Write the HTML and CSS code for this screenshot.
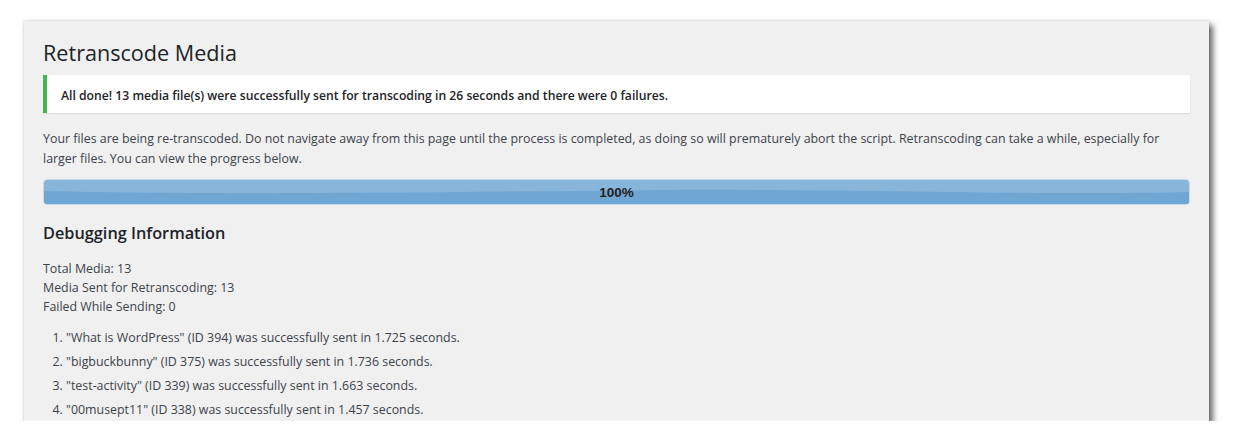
FILE: index.html
```html
<!DOCTYPE html>
<html lang="en">
<head>
<meta charset="utf-8">
<title>Retranscode Media</title>
<link rel="stylesheet" href="styles.css">
</head>
<body>
<div class="window">
  <div class="wrap">
    <h1 class="title">Retranscode Media</h1>
    <div class="notice">
      <p>All done! 13 media file(s) were successfully sent for transcoding in 26 seconds and there were 0 failures.</p>
    </div>
    <p class="intro">Your files are being re-transcoded. Do not navigate away from this page until the process is completed, as doing so will prematurely abort the script. Retranscoding can take a while, especially for larger files. You can view the progress below.</p>
    <div class="progress">
      <svg class="wave" viewBox="0 0 1146 26" preserveAspectRatio="none" aria-hidden="true">
        <rect x="0" y="0" width="1146" height="26" fill="#88b5da"/>
        <path d="M0,12 C150,16 350,14 600,11 C800,9 1000,17 1146,13 L1146,26 L0,26 Z" fill="#70a7d2"/>
      </svg>
      <span class="label">100%</span>
    </div>
    <h3 class="subtitle">Debugging Information</h3>
    <div class="stats">
      <div>Total Media: 13</div>
      <div>Media Sent for Retranscoding: 13</div>
      <div>Failed While Sending: 0</div>
    </div>
    <ol class="log">
      <li>"What is WordPress" (ID 394) was successfully sent in 1.725 seconds.</li>
      <li>"bigbuckbunny" (ID 375) was successfully sent in 1.736 seconds.</li>
      <li>"test-activity" (ID 339) was successfully sent in 1.663 seconds.</li>
      <li>"00musept11" (ID 338) was successfully sent in 1.457 seconds.</li>
    </ol>
  </div>
</div>
</body>
</html>
```
FILE: styles.css
```css
html, body {
  margin: 0;
  padding: 0;
  background: #ffffff;
}
body {
  padding: 21px 0 0 24px;
  font-family: "Open Sans", "Noto Sans", sans-serif;
  font-size: 12.4px;
  color: #3c434a;
}
.window {
  width: 1185px;
  height: 400px;
  background: #f0f0f1;
  overflow: hidden;
  box-shadow: 4px 4px 6px rgba(0, 0, 0, 0.58), 0 0 3px rgba(0, 0, 0, 0.18);
}
.wrap {
  padding: 17px 19px 0 19px;
}
.title {
  margin: 0;
  font-size: 21.6px;
  font-weight: 400;
  line-height: 30px;
  color: #1d2327;
}
.notice {
  margin-top: 7px;
  background: #ffffff;
  border-left: 4px solid #46b450;
  box-shadow: 0 1px 1px rgba(0, 0, 0, 0.08);
  padding: 11px 14px 7px 14px;
}
.notice p {
  margin: 0;
  font-size: 12.2px;
  font-weight: 600;
  line-height: 20px;
  color: #1d2327;
}
.intro {
  margin: 16px 0 0 0;
  line-height: 19.5px;
}
.progress {
  position: relative;
  margin-top: 11px;
  height: 24px;
  border: 1px solid #c5dbec;
  border-radius: 4px;
  overflow: hidden;
  display: flex;
  align-items: center;
  justify-content: center;
}
.wave {
  position: absolute;
  left: 0;
  top: 0;
  width: 100%;
  height: 100%;
}
.label {
  position: relative;
  font-family: "Liberation Sans", Arial, sans-serif;
  font-size: 13.5px;
  font-weight: 700;
  color: #222222;
}
.subtitle {
  margin: 16px 0 0 0;
  font-size: 16.3px;
  font-weight: 600;
  line-height: 24px;
  color: #1d2327;
}
.stats {
  margin-top: 14px;
  line-height: 19px;
}
.log {
  margin: 13px 0 0 0;
  padding-left: 23px;
}
.log li {
  line-height: 18px;
  margin-bottom: 6px;
}
```
